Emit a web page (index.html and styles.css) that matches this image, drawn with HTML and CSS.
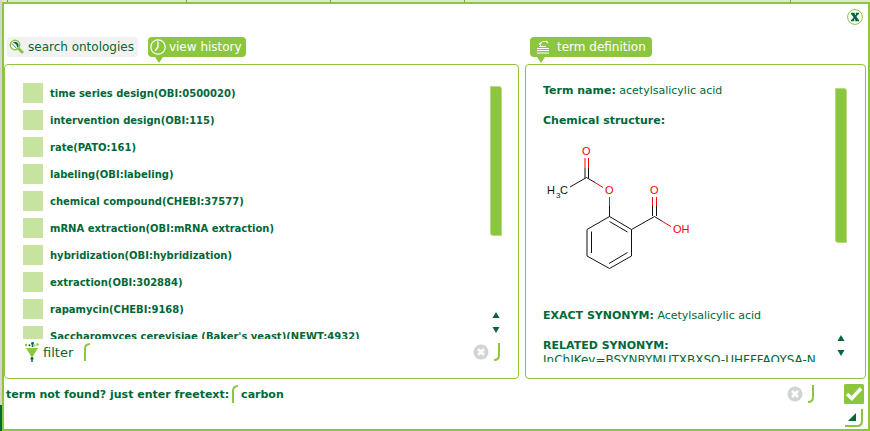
FILE: index.html
```html
<!DOCTYPE html>
<html lang="en">
<head>
<meta charset="utf-8">
<title>Ontology term lookup</title>
<link rel="stylesheet" href="styles.css">
</head>
<body>
<div class="backdrop">
  <div class="backdrop-tabs"><i></i><i></i><i></i><i></i><i></i></div>
  <main class="dialog">
    <header class="titlebar">
      <button class="close" type="button" aria-label="Close">
        <svg width="16" height="16" viewBox="0 0 16 16"><circle cx="8" cy="8" r="7.4" fill="#fff" stroke="#8cc63f" stroke-width="1"/><path d="M4 4.500h3.600M8.800 4.500h3.200M4 11.500h3.200M8.400 11.500H12" stroke="#006838" stroke-width="1.300"/><path d="M5.500 4.500l5 7" stroke="#006838" stroke-width="2.800"/><path d="M10.600 4.500l-5.200 7" stroke="#006838" stroke-width="1.900"/></svg>
      </button>
    </header>

    <div class="columns">
      <section class="column">
        <nav class="tabs">
          <button class="tab" type="button">
            <svg width="16" height="16" viewBox="0 0 16 16"><path d="M9 9l5 5" stroke="#8cc63f" stroke-width="3"/><circle cx="6" cy="6" r="4.700" fill="#eef3ec" stroke="#8cc63f" stroke-width="1.500"/><path d="M4 3.500Q8 1.500 9.500 5.500Q10 8 8 8.500Q8.500 5 4 3.500z" fill="#006838"/><path d="M3 4.500l4.500 5" stroke="#5b9b78" stroke-width="1"/></svg>
            <span>search ontologies</span>
          </button>
          <button class="tab active" type="button">
            <svg width="16" height="16" viewBox="0 0 16 16"><circle cx="8" cy="8" r="7.200" fill="none" stroke="#fff" stroke-width="1.200"/><path d="M8 2.500V8L5 12" fill="none" stroke="#fff" stroke-width="1.300"/></svg>
            <span>view history</span>
          </button>
        </nav>
        <div class="panel history">
          <div class="viewport">
            <ul class="terms">
              <li><label><input type="checkbox">time series design(OBI:0500020)</label></li>
              <li><label><input type="checkbox">intervention design(OBI:115)</label></li>
              <li><label><input type="checkbox">rate(PATO:161)</label></li>
              <li><label><input type="checkbox">labeling(OBI:labeling)</label></li>
              <li><label><input type="checkbox">chemical compound(CHEBI:37577)</label></li>
              <li><label><input type="checkbox">mRNA extraction(OBI:mRNA extraction)</label></li>
              <li><label><input type="checkbox">hybridization(OBI:hybridization)</label></li>
              <li><label><input type="checkbox">extraction(OBI:302884)</label></li>
              <li><label><input type="checkbox">rapamycin(CHEBI:9168)</label></li>
              <li><label><input type="checkbox">Saccharomyces cerevisiae (Baker's yeast)(NEWT:4932)</label></li>
            </ul>
            <div class="scroller">
              <div class="thumb"></div>
              <button class="arrow" type="button" aria-label="Scroll up"><svg width="8" height="6" viewBox="0 0 8 6"><path d="M4 0l3.500 6h-7z"/></svg></button>
              <button class="arrow" type="button" aria-label="Scroll down"><svg width="8" height="6" viewBox="0 0 8 6"><path d="M4 6L.5 0h7z"/></svg></button>
            </div>
          </div>
          <div class="filter">
            <svg width="16" height="20" viewBox="0 0 16 20"><path d="M2 6h12L8.500 15h-1z" fill="#8cc63f"/><g fill="#8cc63f"><circle cx="2" cy="3" r="1.200"/><circle cx="13.500" cy="2.500" r="1.300"/><circle cx="10.500" cy="3.500" r="1"/></g><g fill="#006838"><circle cx="5.500" cy="3.200" r="1"/><circle cx="8.500" cy="1.500" r="1.400"/><circle cx="8.500" cy="4" r="1"/><circle cx="8" cy="16.500" r="1.500"/><circle cx="8" cy="19" r="1"/></g></svg>
            <label for="filter">filter</label>
            <div class="field">
              <svg class="bracket" width="6" height="18" viewBox="0 0 6 18"><path d="M1 18V6Q1 1 6 1"/></svg>
              <input id="filter" type="text">
              <button class="clear" type="button" aria-label="Clear filter"><svg width="16" height="16" viewBox="0 0 16 16"><circle cx="8" cy="8" r="7.500" fill="#d1d3d4"/><path d="M5 5l6 6M11 5l-6 6" stroke="#fff" stroke-width="2.600"/></svg></button>
              <svg class="bracket" width="6" height="18" viewBox="0 0 6 18"><path d="M5 0v12Q5 17 0 17"/></svg>
            </div>
          </div>
        </div>
      </section>

      <section class="column narrow">
        <div class="tabs">
          <button class="tab active" type="button">
            <svg width="14" height="14" viewBox="0 0 14 14"><path d="M1 8.500h12M1 10.500h12M1 13h12" stroke="#fff" stroke-width="1"/><path d="M3 6.500h7M4.500 6V4.500M3 4.500l3-2.500M6.500 1.500h4M10 1l2 2" fill="none" stroke="#fff" stroke-width="1.200"/></svg>
            <span>term definition</span>
          </button>
        </div>
        <div class="panel definition">
          <div class="viewport">
            <div class="details">
              <p><b>Term name:</b> acetylsalicylic acid</p>
              <p><b>Chemical structure:</b></p>
              <svg class="molecule" width="150" height="150" viewBox="543 135 150 150" role="img" aria-label="Acetylsalicylic acid structure">
                <g class="bond">
                  <path d="M570 187L586.500 177.500L595 182.500M585 178V168M588.500 178V168M609.500 206V216.500L631.500 229.500V256L609.500 268.500L587 256V229.500L609.500 216.500M591.500 231.500V253M609.500 221.500L627.500 232M627.500 252.500L609 263.500M631.500 229.500L654.500 216.500L662.500 221.500M652.500 216V206M656.500 216V206"/>
                </g>
                <g class="bond oxygen">
                  <path d="M585 168V158M588.500 168V158M595 182.500L603 187.500M609.500 206V197M652.500 206V197M656.500 206V197M662.500 221.500L671 226.500"/>
                </g>
                <g class="atom oxygen">
                  <text x="582" y="155">O</text><text x="605" y="194">O</text><text x="650" y="194">O</text><text x="673" y="233">OH</text>
                </g>
                <g class="atom"><text x="547" y="194">H</text><text x="560" y="194">C</text><text class="sub" x="556" y="198">3</text></g>
              </svg>
              <p><b>EXACT SYNONYM:</b> Acetylsalicylic acid</p>
              <p><b>RELATED SYNONYM:</b><br><span class="key">InChIKey=BSYNRYMUTXBXSQ-UHFFFAOYSA-N</span></p>
            </div>
            <div class="scroller">
              <div class="thumb"></div>
              <button class="arrow" type="button" aria-label="Scroll up"><svg width="8" height="6" viewBox="0 0 8 6"><path d="M4 0l3.500 6h-7z"/></svg></button>
              <button class="arrow" type="button" aria-label="Scroll down"><svg width="8" height="6" viewBox="0 0 8 6"><path d="M4 6L.5 0h7z"/></svg></button>
            </div>
          </div>
        </div>
      </section>
    </div>

    <footer class="freetext">
      <label for="freetext">term not found? just enter freetext:</label>
      <div class="field">
        <svg class="bracket" width="6" height="18" viewBox="0 0 6 18"><path d="M1 18V6Q1 1 6 1"/></svg>
        <input id="freetext" type="text" value="carbon">
        <button class="clear" type="button" aria-label="Clear freetext"><svg width="16" height="16" viewBox="0 0 16 16"><circle cx="8" cy="8" r="7.500" fill="#d1d3d4"/><path d="M5 5l6 6M11 5l-6 6" stroke="#fff" stroke-width="2.600"/></svg></button>
        <svg class="bracket" width="6" height="18" viewBox="0 0 6 18"><path d="M5 0v12Q5 17 0 17"/></svg>
      </div>
      <button class="accept" type="button" aria-label="Accept"><svg width="20" height="20" viewBox="0 0 20 20"><rect width="20" height="20" rx="1.500" fill="#8cc63f"/><path d="M3 10l4.800 4.500L17 4.500" fill="none" stroke="#fff" stroke-width="3.400"/></svg></button>
    </footer>
    <div class="resize">
      <svg width="18" height="18" viewBox="0 0 18 18"><path d="M3 12L11 4v8z" fill="#006838"/><path d="M17 0v12Q17 17 12 17H0" fill="none" stroke="#8cc63f" stroke-width="2"/></svg>
    </div>
  </main>
</div>
</body>
</html>
```

FILE: styles.css
```css
* {
  box-sizing: border-box;
}

body {
  margin: 0;
  color: #006838;
  font-family: "DejaVu Sans", Verdana, sans-serif;
  font-size: 11px;
  line-height: 15px;
}

button,
input {
  margin: 0;
  padding: 0;
  border: 0;
  background: none;
  color: inherit;
  font: inherit;
}

svg {
  display: block;
  flex: none;
}

.backdrop {
  display: flex;
  flex-direction: column;
  height: 100vh;
  min-height: 300px;
  padding-left: 2px;
  background: linear-gradient(#d2d6d2 0 405px, #006838 405px);
}

.backdrop-tabs {
  display: grid;
  grid-template-columns: 6px 179px 144px 134px 326px;
  flex: none;
  height: 2px;
  background: #dfe6da;
}

.backdrop-tabs i {
  border-right: 1px solid #6fa844;
}

.dialog {
  display: flex;
  flex: 1;
  flex-direction: column;
  min-height: 0;
  border: 2px solid #8cc63f;
  background: #fff;
}

.titlebar {
  display: flex;
  justify-content: flex-end;
  padding: 5px 5px 12px;
}

.columns {
  display: flex;
  flex: 1;
  gap: 6px;
  min-height: 0;
  padding-right: 2px;
}

.column {
  display: flex;
  flex: 515 1 0;
  flex-direction: column;
  min-width: 0;
}

.column.narrow {
  flex-grow: 341;
}

.tabs {
  display: flex;
  gap: 10px;
  padding: 0 4px 7px 3px;
}

.tab {
  position: relative;
  display: flex;
  align-items: center;
  gap: 3px;
  height: 20px;
  padding: 0 4px 0 2px;
  border-radius: 4px;
  background: #f2f2f2;
  font-size: 12px;
}

.tab.active {
  background: #8cc63f;
  color: #fff;
}

.tab.active::after {
  content: "";
  position: absolute;
  top: 20px;
  left: 7px;
  border: solid transparent;
  border-width: 6px 4px 0;
  border-top-color: #8cc63f;
}

.narrow .tabs {
  padding-left: 5px;
}

.narrow .tab {
  gap: 7px;
  padding: 0 6px;
}

.panel {
  display: flex;
  flex: 1;
  flex-direction: column;
  min-height: 0;
  border: 1px solid #8cc63f;
  border-radius: 4px;
}

.history {
  padding: 18px 16px 16px 18px;
}

.definition {
  padding: 18px 18px 16px 17px;
}

.viewport {
  display: flex;
  flex: 1;
  justify-content: space-between;
  min-height: 0;
  overflow: hidden;
}

.terms {
  display: flex;
  flex-direction: column;
  gap: 7px;
  margin: 0;
  padding: 0;
  list-style: none;
  font-size: 10px;
  font-weight: bold;
}

.terms label {
  display: flex;
  align-items: center;
  gap: 7px;
  height: 20px;
}

.terms input {
  width: 20px;
  height: 20px;
  appearance: none;
  background: #c6e39f;
}

.scroller {
  display: flex;
  flex: none;
  flex-direction: column;
  align-items: center;
  width: 12px;
  padding: 3px 0 2px;
}

.thumb {
  width: 12px;
  height: 150px;
  margin-bottom: auto;
  border: 1px solid #b5da84;
  border-radius: 0 3px 0 3px;
  background: #8cc63f;
}

.definition .scroller {
  padding-top: 5px;
}

.definition .thumb {
  height: 155px;
}

.arrow {
  display: flex;
  flex: none;
  align-items: center;
  height: 15px;
  fill: #006838;
}

.filter {
  display: flex;
  align-items: center;
  gap: 3px;
  flex: none;
  height: 23px;
  padding: 3px 2px 0 1px;
  font-size: 13px;
}

.filter .field {
  margin-left: 8px;
}

.field {
  display: flex;
  flex: 1;
  align-items: center;
  min-width: 0;
}

.field input {
  flex: 1;
  min-width: 0;
  padding: 0 3px;
  outline: 0;
}

.clear {
  margin-right: 5px;
}

.bracket {
  fill: none;
  stroke: #8cc63f;
  stroke-width: 2;
}

.details p {
  margin: 0 0 15px;
}

.key {
  font-size: 12px;
}

.molecule {
  margin: -8px 0 23px;
}

.bond {
  fill: none;
  stroke: #111;
  stroke-width: 1;
}

.bond.oxygen {
  stroke: #f00;
}

.atom {
  fill: #111;
  font-family: "Liberation Sans", sans-serif;
  font-size: 11px;
}

.atom.oxygen {
  fill: #f00;
}

.sub {
  font-size: 8px;
}

.freetext {
  display: flex;
  align-items: center;
  gap: 3px;
  padding: 5px 4px 5px 2px;
  font-weight: bold;
}

.accept {
  margin-left: 27px;
}

.resize {
  display: flex;
  justify-content: flex-end;
  padding: 0 5px 2px;
}
```
